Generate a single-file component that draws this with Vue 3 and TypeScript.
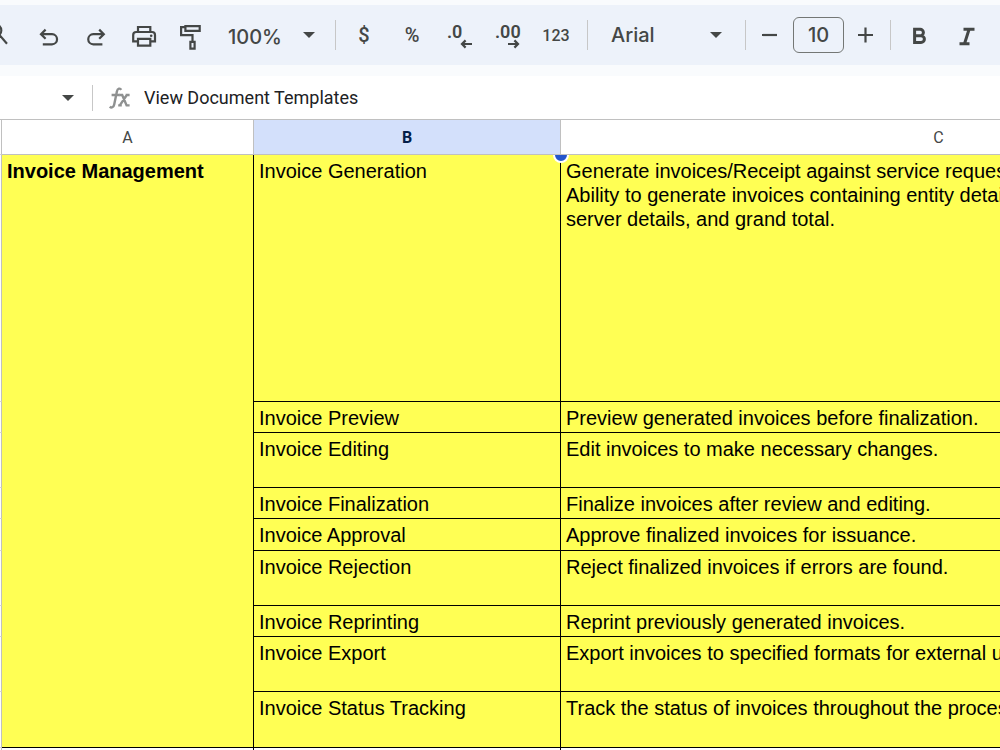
<script setup lang="ts">
import { ref } from 'vue'

interface SheetRow {
  feature: string
  description: string
  height: number
}

const zoom = ref('100%')
const font = ref('Arial')
const fontSize = ref('10')
const formula = ref('View Document Templates')

const rows: SheetRow[] = [
  {
    feature: 'Invoice Generation',
    description:
      'Generate invoices/Receipt against service requests.\nAbility to generate invoices containing entity details,\nserver details, and grand total.',
    height: 247,
  },
  { feature: 'Invoice Preview', description: 'Preview generated invoices before finalization.', height: 31 },
  { feature: 'Invoice Editing', description: 'Edit invoices to make necessary changes.', height: 55 },
  { feature: 'Invoice Finalization', description: 'Finalize invoices after review and editing.', height: 31 },
  { feature: 'Invoice Approval', description: 'Approve finalized invoices for issuance.', height: 32 },
  { feature: 'Invoice Rejection', description: 'Reject finalized invoices if errors are found.', height: 55 },
  { feature: 'Invoice Reprinting', description: 'Reprint previously generated invoices.', height: 31 },
  { feature: 'Invoice Export', description: 'Export invoices to specified formats for external use.', height: 55 },
  { feature: 'Invoice Status Tracking', description: 'Track the status of invoices throughout the process.', height: 56 },
]
</script>

<template>
  <div class="app">
    <div class="toolbar" role="toolbar" aria-label="Main toolbar">
      <button class="tool" type="button" aria-label="Search the menus">
        <svg width="48" height="60" viewBox="0 0 48 60">
          <circle cx="19" cy="25.5" r="6.3" />
          <path d="M23.6 30.2L31 38.8" />
        </svg>
      </button>
      <button class="tool" type="button" aria-label="Undo">
        <svg width="48" height="60" viewBox="0 0 48 60">
          <path d="M17.2 29.2H28a5.05 5.05 0 0 1 0 10.1H18.8M21.6 24.6L17 29.2l4.6 4.6" />
        </svg>
      </button>
      <button class="tool" type="button" aria-label="Redo">
        <svg width="48" height="60" viewBox="0 0 48 60">
          <path d="M31.6 29.2H21.3a5.05 5.05 0 0 0 0 10.1H30.4M27.2 24.6l4.6 4.6l-4.6 4.6" />
        </svg>
      </button>
      <button class="tool" type="button" aria-label="Print">
        <svg width="48" height="60" viewBox="0 0 48 60">
          <path d="M18 27V22H30.3V27" />
          <path d="M18 36.4H13.2V30a3 3 0 0 1 3-3H32a3 3 0 0 1 3 3V36.4H30.3" />
          <path d="M18 33.8H30.3V40.7H18z" />
          <circle class="solid" cx="31.2" cy="30.8" r="1.3" />
        </svg>
      </button>
      <button class="tool" type="button" aria-label="Paint format">
        <svg width="48" height="60" viewBox="0 0 48 60">
          <path d="M17.4 21.1H31.7V25.8H17.4z" />
          <path d="M17.4 22.2H13.1V30.2H24.5V36" />
          <path d="M22.4 36.8H26.6V43.7H22.4z" />
        </svg>
      </button>

      <div class="picker zoom">
        <select v-model="zoom" aria-label="Zoom">
          <option>50%</option>
          <option>100%</option>
          <option>200%</option>
        </select>
        <svg class="caret" width="12" height="6" viewBox="0 0 12 6"><path d="M0 0H12L6 6z" /></svg>
      </div>
      <span class="divider"></span>

      <button class="tool sign" type="button" aria-label="Format as currency">$</button>
      <button class="tool sign" type="button" aria-label="Format as percent">%</button>
      <button class="tool" type="button" aria-label="Decrease decimal places">
        <svg width="48" height="60" viewBox="0 0 48 60">
          <text x="11" y="33">.0</text>
          <path d="M36 39H26.2M29.6 35.4L26 39l3.6 3.6" />
        </svg>
      </button>
      <button class="tool" type="button" aria-label="Increase decimal places">
        <svg width="48" height="60" viewBox="0 0 48 60">
          <text x="11" y="33">.00</text>
          <path d="M24 39H33.8M30.4 35.4L34 39l-3.6 3.6" />
        </svg>
      </button>
      <button class="tool digits" type="button" aria-label="More formats">123</button>
      <span class="divider"></span>

      <div class="picker font">
        <select v-model="font" aria-label="Font">
          <option>Arial</option>
          <option>Georgia</option>
          <option>Verdana</option>
        </select>
        <svg class="caret" width="12" height="6" viewBox="0 0 12 6"><path d="M0 0H12L6 6z" /></svg>
      </div>
      <span class="divider"></span>

      <button class="tool step" type="button" aria-label="Decrease font size">
        <svg width="38" height="60" viewBox="0 0 38 60"><path d="M12 30H27" /></svg>
      </button>
      <input v-model="fontSize" class="size" type="text" aria-label="Font size" />
      <button class="tool step" type="button" aria-label="Increase font size">
        <svg width="38" height="60" viewBox="0 0 38 60"><path d="M10 30H25M17.5 22.5V37.5" /></svg>
      </button>
      <span class="divider"></span>

      <button class="tool" type="button" aria-label="Bold">
        <svg width="48" height="60" viewBox="0 0 48 60">
          <path class="heavy" d="M19.6 24.3H25.2a3.2 3.2 0 0 1 0 6.4H19.6zM19.6 30.7H26a3.4 3.4 0 0 1 0 6.8H19.6z" />
        </svg>
      </button>
      <button class="tool" type="button" aria-label="Italic">
        <svg width="48" height="60" viewBox="0 0 48 60">
          <path class="heavy" d="M20.5 24.2H31.5M16.5 38.8H26.5M26.1 24.2L21.5 38.8" />
        </svg>
      </button>
    </div>

    <div class="formula-bar">
      <button class="name-box" type="button" aria-label="Name box">
        <svg class="caret" width="12" height="6" viewBox="0 0 12 6"><path d="M0 0H12L6 6z" /></svg>
      </button>
      <span class="formula-divider"></span>
      <svg class="fx" width="24" height="26" viewBox="0 0 24 26" aria-hidden="true">
        <path d="M13.2 4.8C12.2 3 9.6 3.1 8.9 6.4L6.2 19.4C5.6 22.4 3.4 23.2 1.8 21.6M3.6 10H11.8" />
        <path d="M11.4 10H14.2L18.6 20.4H21.6M21.4 10H18.8L11.8 20.4M10.2 20.4H13.8M17.6 10H21.6" />
      </svg>
      <input v-model="formula" class="formula" type="text" aria-label="Formula" />
    </div>

    <main class="sheet">
      <table>
        <colgroup>
          <col class="col-index" />
          <col class="col-a" />
          <col class="col-b" />
          <col class="col-c" />
        </colgroup>
        <thead>
          <tr>
            <td class="index"></td>
            <th scope="col">A</th>
            <th scope="col" class="selected">B</th>
            <th scope="col">C</th>
          </tr>
        </thead>
        <tbody>
          <tr v-for="(row, i) in rows" :key="row.feature" :style="{ height: row.height + 'px' }">
            <td class="index"></td>
            <th v-if="i === 0" class="cell group" scope="rowgroup" :rowspan="rows.length">Invoice Management</th>
            <td class="cell">
              {{ row.feature }}
              <span v-if="i === 0" class="handle"><span class="knob"></span></span>
            </td>
            <td class="cell">{{ row.description }}</td>
          </tr>
          <tr class="blank">
            <td class="index"></td>
            <td class="cell"></td>
            <td class="cell"></td>
            <td class="cell"></td>
          </tr>
        </tbody>
      </table>
    </main>
  </div>
</template>

<style>
body {
  margin: 0;
  overflow: hidden;
}
</style>

<style scoped>
* {
  box-sizing: border-box;
}

.app {
  display: flex;
  flex-direction: column;
  height: 100vh;
  overflow: hidden;
  background: #fff;
  color: #444746;
  font-family: Inter, Roboto, sans-serif;
}

button,
input,
select {
  margin: 0;
  padding: 0;
  border: 0;
  background: transparent;
  color: inherit;
  font: inherit;
  outline: none;
}

.toolbar {
  display: flex;
  flex: none;
  align-items: center;
  height: 76px;
  padding-bottom: 6px;
  margin-left: -24px;
  background: linear-gradient(#f9fbfd 5px, #edf2fa 5px, #edf2fa 65px, #f9fbfd 65px);
}

.tool {
  display: flex;
  flex: none;
  align-items: center;
  justify-content: center;
  width: 48px;
  height: 60px;
}

.tool svg,
.fx {
  display: block;
  fill: none;
  stroke: #444746;
  stroke-width: 2.2;
}

.tool svg text {
  fill: #444746;
  stroke: none;
  font: 600 18px Roboto, sans-serif;
}

.tool .solid {
  fill: #444746;
  stroke: none;
}

.tool .heavy {
  stroke-width: 3;
}

.sign {
  font: 500 20px Roboto, sans-serif;
}

.digits {
  font: 500 16px Roboto, sans-serif;
}

.step {
  width: 38px;
}

.divider {
  flex: none;
  width: 1px;
  height: 30px;
  margin: 0 4px;
  background: #c7c7c7;
}

.digits + .divider {
  margin-left: 7px;
}

.caret {
  display: block;
  flex: none;
  fill: #444746;
}

.picker {
  display: flex;
  flex: none;
  align-items: center;
  font-size: 20px;
  font-weight: 500;
}

.picker select {
  flex: 1;
  min-width: 0;
  height: 40px;
  appearance: none;
}

.zoom {
  width: 115px;
  padding: 0 16px 0 12px;
}

.zoom select {
  padding-top: 3px;
}

.font {
  width: 149px;
  padding: 0 19px;
}

.size {
  flex: none;
  width: 51px;
  height: 36px;
  margin: 0 4px 0 5px;
  border: 1px solid #747775;
  border-radius: 6px;
  font-size: 20px;
  font-weight: 500;
  text-align: center;
}

.formula-bar {
  display: flex;
  flex: none;
  align-items: center;
  height: 44px;
  border-bottom: 1px solid #c0c0c0;
}

.name-box {
  display: flex;
  align-items: center;
  justify-content: flex-end;
  width: 92px;
  height: 42px;
  padding-right: 18px;
}

.formula-divider {
  width: 1px;
  height: 26px;
  background: #c7c7c7;
}

.fx {
  flex: none;
  margin: 0 12px 0 15px;
  stroke: #8f9191;
  stroke-width: 2.4;
}

.formula {
  flex: 1;
  min-width: 0;
  height: 40px;
  color: #202124;
  font: 18px Roboto, sans-serif;
}

.sheet {
  flex: 1;
  min-height: 0;
  overflow: hidden;
}

table {
  width: 1317px;
  table-layout: fixed;
  border-spacing: 0;
  font-family: 'Liberation Sans', Arial, sans-serif;
}

.col-index {
  width: 2px;
}

.col-a {
  width: 252px;
}

.col-b {
  width: 307px;
}

.col-c {
  width: 756px;
}

thead th {
  height: 35px;
  padding: 0;
  border-right: 1px solid #c0c0c0;
  border-bottom: 1px solid #c0c0c0;
  font: 16px Roboto, sans-serif;
}

thead th.selected {
  background: #d3e0fb;
  color: #041e49;
  font-weight: 700;
}

.index {
  padding: 0;
  border-right: 1px solid #c0c0c0;
  border-bottom: 1px solid #d5d5d5;
}

.cell {
  position: relative;
  padding: 4px 4px 0 5px;
  border-right: 1px solid #000;
  border-bottom: 1px solid #000;
  background: #ffff54;
  color: #000;
  font-size: 20px;
  font-weight: 400;
  line-height: 24px;
  text-align: left;
  vertical-align: top;
  white-space: pre-line;
}

.cell.group {
  font-weight: 700;
}

.blank {
  height: 31px;
}

.blank .cell {
  background: #fff;
}

.handle {
  position: absolute;
  z-index: 1;
  top: 0;
  right: -9px;
  width: 16px;
  height: 8px;
  overflow: hidden;
}

.knob {
  display: block;
  width: 16px;
  height: 16px;
  margin-top: -8px;
  border: 2px solid #fff;
  border-radius: 50%;
  background: #2456cc;
}
</style>
